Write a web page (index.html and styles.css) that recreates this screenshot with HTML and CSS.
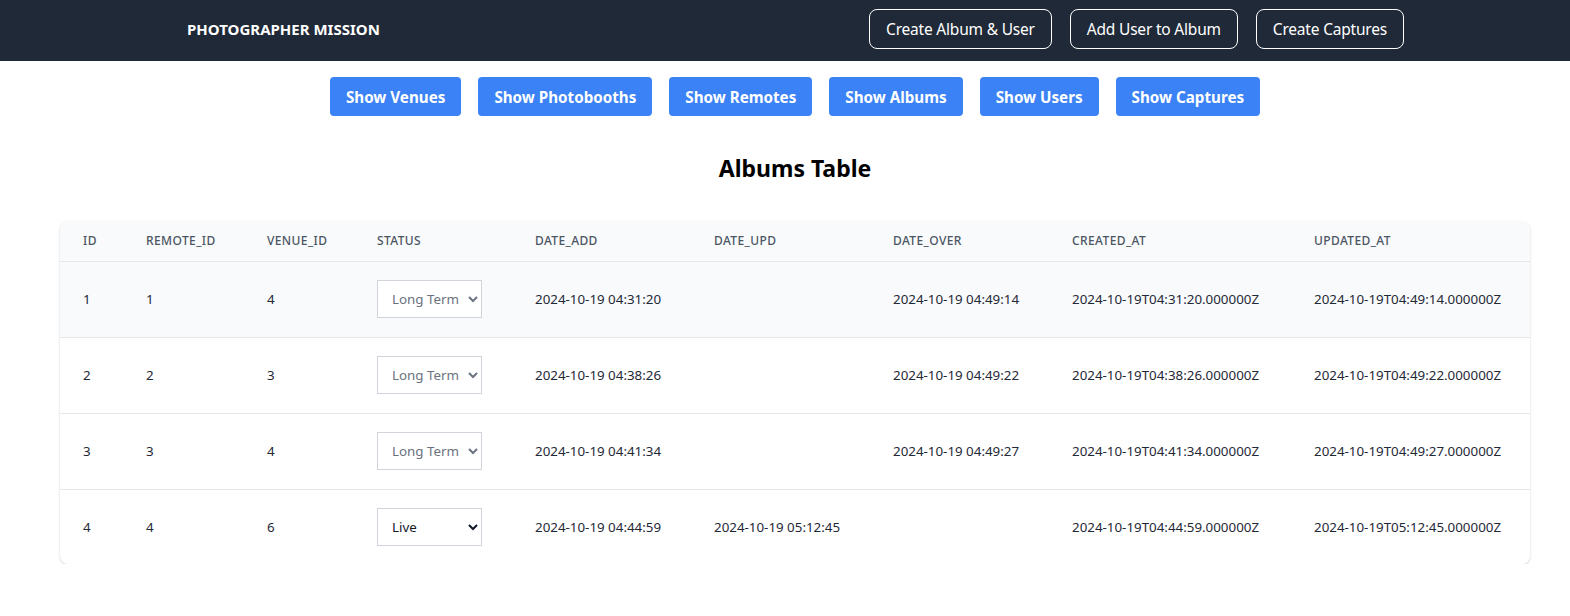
FILE: index.html
```html
<!DOCTYPE html>
<html lang="en">
<head>
<meta charset="utf-8">
<title>Photographer Mission</title>
<link rel="stylesheet" href="styles.css">
</head>
<body>
<header class="topbar">
  <div class="topbar-inner">
    <div class="brand">PHOTOGRAPHER MISSION</div>
    <nav class="top-actions">
      <button class="btn-outline">Create Album &amp; User</button>
      <button class="btn-outline">Add User to Album</button>
      <button class="btn-outline">Create Captures</button>
    </nav>
  </div>
</header>
<main class="main">
  <div class="show-row">
    <button class="btn-blue">Show Venues</button>
    <button class="btn-blue">Show Photobooths</button>
    <button class="btn-blue">Show Remotes</button>
    <button class="btn-blue">Show Albums</button>
    <button class="btn-blue">Show Users</button>
    <button class="btn-blue">Show Captures</button>
  </div>
  <h2 class="table-title">Albums Table</h2>
  <div class="card">
    <table class="data">
      <colgroup>
        <col class="c-id"><col class="c-remote"><col class="c-venue"><col class="c-status">
        <col class="c-date"><col class="c-date"><col class="c-date"><col class="c-ts"><col class="c-ts2">
      </colgroup>
      <thead>
        <tr>
          <th>ID</th><th>REMOTE_ID</th><th>VENUE_ID</th><th>STATUS</th><th>DATE_ADD</th><th>DATE_UPD</th><th>DATE_OVER</th><th>CREATED_AT</th><th>UPDATED_AT</th>
        </tr>
      </thead>
      <tbody>
        <tr class="hl">
          <td>1</td><td>1</td><td>4</td>
          <td><select class="status"><option>Long Term</option><option>Live</option></select></td>
          <td>2024-10-19 04:31:20</td><td></td><td>2024-10-19 04:49:14</td>
          <td>2024-10-19T04:31:20.000000Z</td><td>2024-10-19T04:49:14.000000Z</td>
        </tr>
        <tr>
          <td>2</td><td>2</td><td>3</td>
          <td><select class="status"><option>Long Term</option><option>Live</option></select></td>
          <td>2024-10-19 04:38:26</td><td></td><td>2024-10-19 04:49:22</td>
          <td>2024-10-19T04:38:26.000000Z</td><td>2024-10-19T04:49:22.000000Z</td>
        </tr>
        <tr>
          <td>3</td><td>3</td><td>4</td>
          <td><select class="status"><option>Long Term</option><option>Live</option></select></td>
          <td>2024-10-19 04:41:34</td><td></td><td>2024-10-19 04:49:27</td>
          <td>2024-10-19T04:41:34.000000Z</td><td>2024-10-19T04:49:27.000000Z</td>
        </tr>
        <tr>
          <td>4</td><td>4</td><td>6</td>
          <td><select class="status live"><option>Live</option><option>Long Term</option></select></td>
          <td>2024-10-19 04:44:59</td><td>2024-10-19 05:12:45</td><td></td>
          <td>2024-10-19T04:44:59.000000Z</td><td>2024-10-19T05:12:45.000000Z</td>
        </tr>
      </tbody>
    </table>
  </div>
</main>
</body>
</html>
```
FILE: styles.css
```css
* { box-sizing: border-box; }
body {
  margin: 0;
  font-family: "Noto Sans", "Open Sans", sans-serif;
  color: #111827;
  background: #fff;
}
.topbar {
  background: #1f2937;
  height: 61px;
}
.topbar-inner {
  height: 100%;
  display: flex;
  align-items: flex-start;
  justify-content: space-between;
  padding: 9px 166px 0 187px;
}
.brand {
  color: #fff;
  font-weight: 700;
  font-size: 15px;
  line-height: 40px;
}
.top-actions {
  display: flex;
  gap: 18px;
}
.btn-outline {
  font-family: inherit;
  font-size: 15.5px;
  color: #fff;
  background: transparent;
  border: 1px solid #fff;
  border-radius: 8px;
  height: 40px;
  padding: 0 16px;
  letter-spacing: -0.2px;
}
.main {
  padding: 0 40px 0 60px;
}
.show-row {
  display: flex;
  justify-content: center;
  gap: 17px;
  margin-top: 16px;
}
.btn-blue {
  font-family: inherit;
  font-weight: 700;
  font-size: 15.2px;
  color: #fff;
  background: #3b82f6;
  border: 0;
  border-radius: 4px;
  height: 39px;
  padding: 0 16px;
}
.table-title {
  text-align: center;
  font-size: 23px;
  font-weight: 700;
  margin: 37px 0 38px;
  line-height: 30px;
  color: #000;
}
.card {
  background: #fff;
  border-radius: 8px;
  box-shadow: 0 1px 3px rgba(0,0,0,0.12), 0 1px 2px rgba(0,0,0,0.06);
  overflow: hidden;
}
.data {
  width: 100%;
  border-collapse: collapse;
  table-layout: fixed;
  font-size: 13.35px;
}
.c-id { width: 63px; }
.c-remote { width: 121px; }
.c-venue { width: 110px; }
.c-status { width: 158px; }
.c-date { width: 179px; }
.c-ts { width: 242px; }
.c-ts2 { width: 239px; }
.data thead tr { background: #f9fafb; }
.data th {
  text-align: left;
  font-weight: 500;
  font-size: 12px;
  color: #4b5563;
  letter-spacing: 0.4px;
  height: 40px;
  padding: 0 0 0 23px;
  border-bottom: 1px solid #e5e7eb;
}
.data td {
  height: 76px;
  padding: 0 0 0 23px;
  color: #1f2937;
  border-bottom: 1px solid #e5e7eb;
  white-space: nowrap;
}
.data tbody tr:last-child td { border-bottom: 0; height: 75px; }
.data tr.hl { background: #f9fafb; }
.status {
  font-family: inherit;
  font-size: 13.35px;
  width: 105px;
  height: 38px;
  padding: 0 6px 0 10px;
  border: 1px solid #d1d5db;
  background: #fff;
  color: #6b7280;
  border-radius: 0;
}
.status.live { color: #111827; }
```
